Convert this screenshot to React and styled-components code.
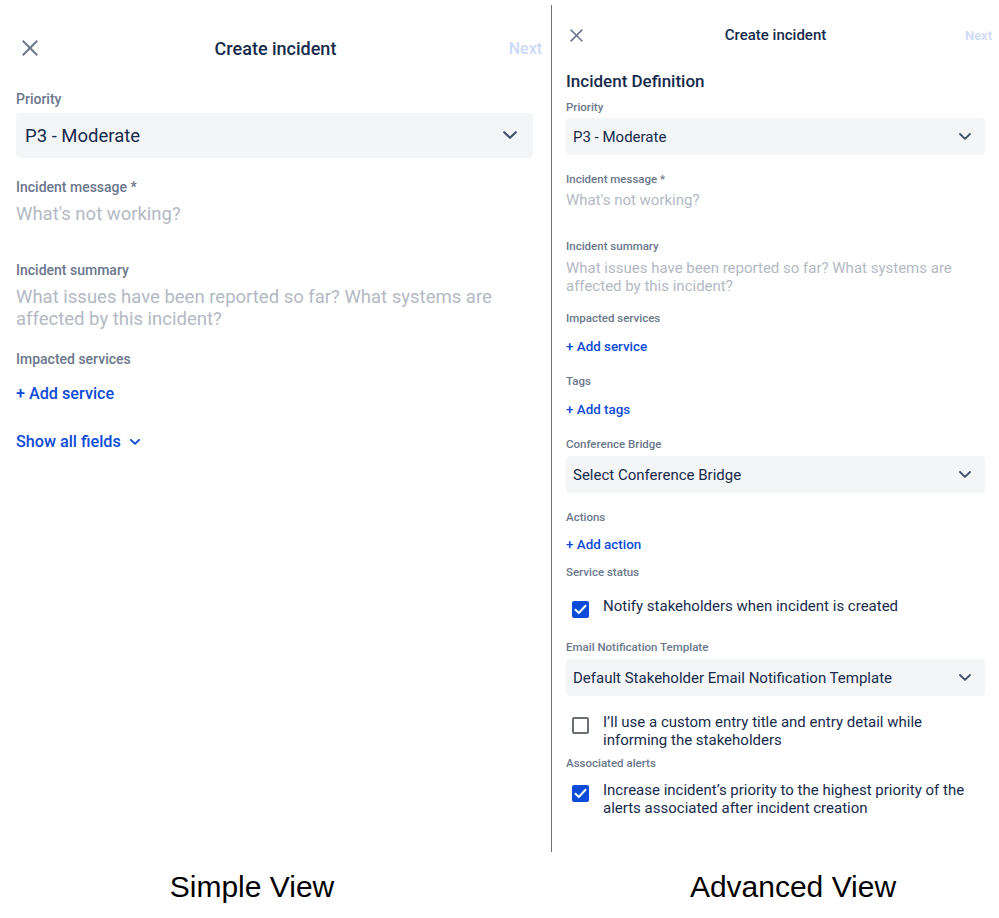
import React from "react";
import styled, { createGlobalStyle, ThemeProvider } from "styled-components";

const GlobalStyle = createGlobalStyle`
  html, body { margin: 0; padding: 0; background: #ffffff; overflow: hidden; }
  body { font-family: Roboto, "Noto Sans", Arial, sans-serif; }
  * { box-sizing: border-box; }
`;

const large = {
  headPadTop: 30, headH: 36, headPad: 9, closeOffset: 13,
  closeSize: 16, titleSize: 18, nextSize: 16,
  padL: 16, padR: 18,
  labelSize: 14, labelLh: 20,
  inputSize: 18.5, inputLh: 24, multiLh: 22,
  linkSize: 16.2, linkLh: 24,
  selectH: 45, selectPadL: 9, selectPadR: 16, chevron: 14,
  sectionSize: 17, sectionLh: 22,
};

const small = {
  headPadTop: 25, headH: 20, headPad: 7, closeOffset: 11,
  closeSize: 13, titleSize: 15, nextSize: 13,
  padL: 14, padR: 14,
  labelSize: 11.5, labelLh: 16,
  inputSize: 15, inputLh: 20, multiLh: 18,
  linkSize: 13.4, linkLh: 20,
  selectH: 37, selectPadL: 7, selectPadR: 14, chevron: 12,
  sectionSize: 17, sectionLh: 22,
};

const BLUE = "#0c4bd8";
const DARK = "#172b4d";
const MUTED = "#6b778c";
const PLACEHOLDER = "#b3b9c4";

const Page = styled.div`
  width: 999px;
  height: 918px;
  display: flex;
  flex-direction: column;
`;

const Screens = styled.div`
  display: flex;
  height: 852px;
`;

const Panel = styled.section`
  width: ${(p) => p.$width}px;
  flex: none;
  display: flex;
  flex-direction: column;
`;

const Divider = styled.div`
  width: 1px;
  flex: none;
  margin-top: 5px;
  background: #6f6f6f;
`;

const Header = styled.header`
  display: grid;
  grid-template-columns: 1fr auto 1fr;
  align-items: center;
  height: ${(p) => p.theme.headH}px;
  margin-top: ${(p) => p.theme.headPadTop}px;
  padding: 0 ${(p) => p.theme.headPad}px;
`;

const CloseButton = styled.div`
  display: flex;
  align-items: center;
  padding-left: ${(p) => p.theme.closeOffset}px;
  color: ${MUTED};
`;

const Title = styled.h1`
  margin: 0;
  font-size: ${(p) => p.theme.titleSize}px;
  font-weight: 500;
  color: ${DARK};
  white-space: nowrap;
`;

const Next = styled.div`
  justify-self: end;
  font-size: ${(p) => p.theme.nextSize}px;
  font-weight: 500;
  color: #cbd9f6;
`;

const Body = styled.div`
  display: flex;
  flex-direction: column;
  align-items: stretch;
  padding: 0 ${(p) => p.theme.padR}px 0 ${(p) => p.theme.padL}px;
`;

const SectionTitle = styled.h2`
  margin: ${(p) => p.$mt}px 0 0;
  font-size: ${(p) => p.theme.sectionSize}px;
  line-height: ${(p) => p.theme.sectionLh}px;
  font-weight: 500;
  color: ${DARK};
`;

const Label = styled.div`
  margin-top: ${(p) => p.$mt}px;
  font-size: ${(p) => p.theme.labelSize}px;
  line-height: ${(p) => p.theme.labelLh}px;
  font-weight: 500;
  color: ${MUTED};
`;

const Select = styled.div`
  margin-top: ${(p) => p.$mt}px;
  height: ${(p) => p.theme.selectH}px;
  display: flex;
  align-items: center;
  justify-content: space-between;
  padding: 0 ${(p) => p.theme.selectPadR}px 0 ${(p) => p.theme.selectPadL}px;
  background: #f4f5f7;
  border-radius: 4px;
  font-size: ${(p) => p.theme.inputSize}px;
  color: ${DARK};
`;

const Placeholder = styled.div`
  margin-top: ${(p) => p.$mt}px;
  font-size: ${(p) => p.theme.inputSize}px;
  line-height: ${(p) => (p.$multi ? p.theme.multiLh : p.theme.inputLh)}px;
  color: ${PLACEHOLDER};
  max-width: ${(p) => p.$maxW || 9999}px;
`;

const LinkText = styled.div`
  margin-top: ${(p) => p.$mt}px;
  display: flex;
  align-items: center;
  gap: 9px;
  font-size: ${(p) => p.theme.linkSize}px;
  line-height: ${(p) => p.theme.linkLh}px;
  font-weight: 500;
  color: ${BLUE};
`;

const CheckRow = styled.div`
  margin-top: ${(p) => p.$mt}px;
  display: flex;
  align-items: flex-start;
  gap: 14px;
  padding-left: 6px;
`;

const Box = styled.div`
  width: 17px;
  height: 17px;
  flex: none;
  margin-top: 4px;
  border-radius: 2px;
  display: flex;
  align-items: center;
  justify-content: center;
  background: ${(p) => (p.$checked ? BLUE : "#ffffff")};
  border: ${(p) => (p.$checked ? "none" : "2px solid #6b6e75")};
`;

const CheckText = styled.div`
  font-size: 15px;
  line-height: 18px;
  color: ${DARK};
  max-width: 370px;
`;

const Captions = styled.div`
  display: grid;
  grid-template-columns: 504px 1fr;
  padding-top: 17px;
`;

const Caption = styled.div`
  font-family: "Liberation Sans", Arial, sans-serif;
  font-size: 30px;
  line-height: 36px;
  color: #000;
  text-align: center;
  padding-left: ${(p) => p.$offset || 0}px;
`;

const CloseIcon = ({ size }) => (
  <svg width={size} height={size} viewBox="0 0 16 16">
    <path d="M1.5 1.5 L14.5 14.5 M14.5 1.5 L1.5 14.5" stroke="currentColor" strokeWidth="2" strokeLinecap="square" fill="none" />
  </svg>
);

const Chevron = ({ size, color = "#42526e", stroke = 2.2 }) => (
  <svg width={size} height={size * 0.6} viewBox="0 0 14 8.4">
    <path d="M1.2 1.2 L7 6.8 L12.8 1.2" stroke={color} strokeWidth={stroke} strokeLinecap="round" strokeLinejoin="round" fill="none" />
  </svg>
);

const Tick = () => (
  <svg width="13" height="11" viewBox="0 0 13 11">
    <path d="M1.5 5.8 L4.8 9 L11.5 1.8" stroke="#fff" strokeWidth="2" strokeLinecap="round" strokeLinejoin="round" fill="none" />
  </svg>
);

const SelectField = ({ mt, value, theme }) => (
  <Select $mt={mt}>
    <span>{value}</span>
    <Chevron size={theme.chevron} />
  </Select>
);

const ScreenHeader = ({ theme }) => (
  <Header>
    <CloseButton>
      <CloseIcon size={theme.closeSize} />
    </CloseButton>
    <Title>Create incident</Title>
    <Next>Next</Next>
  </Header>
);

const Check = ({ checked, mt, children }) => (
  <CheckRow $mt={mt}>
    <Box $checked={checked}>{checked && <Tick />}</Box>
    <CheckText>{children}</CheckText>
  </CheckRow>
);

const SimpleView = () => (
  <ThemeProvider theme={large}>
    <Panel $width={551}>
      <ScreenHeader theme={large} />
      <Body>
        <Label $mt={23}>Priority</Label>
        <SelectField mt={4} value="P3 - Moderate" theme={large} />
        <Label $mt={19}>Incident message *</Label>
        <Placeholder $mt={5}>What's not working?</Placeholder>
        <Label $mt={34}>Incident summary</Label>
        <Placeholder $mt={6} $multi $maxW={490}>
          What issues have been reported so far? What systems are affected by this incident?
        </Placeholder>
        <Label $mt={19}>Impacted services</Label>
        <LinkText $mt={13}>+ Add service</LinkText>
        <LinkText $mt={24}>
          Show all fields
          <Chevron size={10} color={BLUE} stroke={2.6} />
        </LinkText>
      </Body>
    </Panel>
  </ThemeProvider>
);

const AdvancedView = () => (
  <ThemeProvider theme={small}>
    <Panel $width={447}>
      <ScreenHeader theme={small} />
      <Body>
        <SectionTitle $mt={25}>Incident Definition</SectionTitle>
        <Label $mt={7}>Priority</Label>
        <SelectField mt={3} value="P3 - Moderate" theme={small} />
        <Label $mt={16}>Incident message *</Label>
        <Placeholder $mt={3}>What's not working?</Placeholder>
        <Label $mt={28}>Incident summary</Label>
        <Placeholder $mt={5} $multi $maxW={400}>
          What issues have been reported so far? What systems are affected by this incident?
        </Placeholder>
        <Label $mt={15}>Impacted services</Label>
        <LinkText $mt={11}>+ Add service</LinkText>
        <Label $mt={16}>Tags</Label>
        <LinkText $mt={11}>+ Add tags</LinkText>
        <Label $mt={16}>Conference Bridge</Label>
        <SelectField mt={4} value="Select Conference Bridge" theme={small} />
        <Label $mt={16}>Actions</Label>
        <LinkText $mt={10}>+ Add action</LinkText>
        <Label $mt={9}>Service status</Label>
        <Check checked mt={17}>Notify stakeholders when incident is created</Check>
        <Label $mt={21}>Email Notification Template</Label>
        <SelectField mt={4} value="Default Stakeholder Email Notification Template" theme={small} />
        <Check mt={17}>I’ll use a custom entry title and entry detail while informing the stakeholders</Check>
        <Label $mt={6}>Associated alerts</Label>
        <Check checked mt={10}>
          Increase incident’s priority to the highest priority of the alerts associated after incident creation
        </Check>
      </Body>
    </Panel>
  </ThemeProvider>
);

export default function App() {
  return (
    <>
      <GlobalStyle />
      <Page>
        <Screens>
          <SimpleView />
          <Divider />
          <AdvancedView />
        </Screens>
        <Captions>
          <Caption>Simple View</Caption>
          <Caption $offset={83}>Advanced View</Caption>
        </Captions>
      </Page>
    </>
  );
}
